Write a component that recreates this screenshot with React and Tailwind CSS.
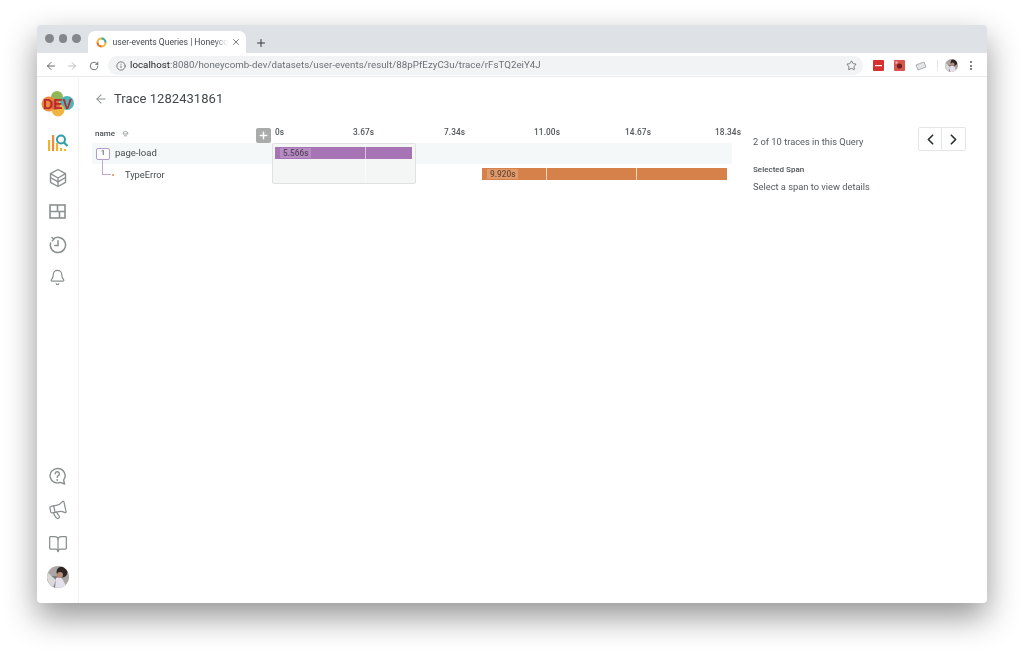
import React from "react";
import { ArrowLeft, ArrowRight, RotateCw, Info, Star, Plus, X, ChevronLeft, ChevronRight, Bell, Megaphone, BookOpen } from "lucide-react";

function Avatar({ size }) {
  return (
    <svg width={size} height={size} viewBox="0 0 22 22" className="block">
      <defs><clipPath id={"av" + size}><circle cx="11" cy="11" r="11" /></clipPath></defs>
      <g clipPath={"url(#av" + size + ")"}>
        <rect width="22" height="22" fill="#a9a6a4" />
        <rect x="0" y="10" width="12" height="12" fill="#7d7f7c" />
        <path d="M0 6 L9 14 L6 22 L0 22Z" fill="#d9dad8" />
        <path d="M9 12 Q14 10 16 14 L20 22 L8 22Z" fill="#e4e0ee" />
        <circle cx="15" cy="6" r="5.5" fill="#2e2523" />
        <circle cx="13" cy="9" r="3" fill="#b98d78" />
      </g>
    </svg>
  );
}

function Logo() {
  return (
    <div className="relative w-[34px] h-[26px]">
      <svg width="34" height="26" viewBox="0 0 34 26" className="absolute inset-0">
        <circle cx="16" cy="6" r="6" fill="#8fb85a" />
        <circle cx="8" cy="13" r="7.5" fill="#ee8a3c" />
        <circle cx="26" cy="12" r="7" fill="#4fb5bd" />
        <circle cx="17" cy="19" r="6.5" fill="#eeb640" />
        <circle cx="14" cy="14" r="5" fill="#dc6e45" />
      </svg>
      <span className="absolute inset-0 flex items-center justify-center text-[14px] font-bold text-[#b92a2b] font-['Liberation_Sans',sans-serif]">DEV</span>
    </div>
  );
}

function QueryIcon() {
  return (
    <svg width="22" height="20" viewBox="0 0 22 20" fill="none" className="mb-[3px] ml-[1px]">
      <rect x="1" y="7" width="2.2" height="11" fill="#f0b429" />
      <rect x="5" y="2" width="2.2" height="16" fill="#ee8a3c" />
      <rect x="9" y="10" width="2.2" height="8" fill="#f0b429" />
      <rect x="13" y="15" width="2" height="3" fill="#f0b429" />
      <rect x="17" y="16" width="2" height="2" fill="#f0b429" />
      <circle cx="14" cy="6.5" r="4" stroke="#2f9fa8" strokeWidth="2" />
      <path d="M17 9.5 L20.5 13" stroke="#2f9fa8" strokeWidth="2.2" />
    </svg>
  );
}

function BoxIcon() {
  return (
    <svg width="20" height="20" viewBox="0 0 20 20" fill="none" stroke="#8a8f8f" strokeWidth="1.4" strokeLinejoin="round">
      <path d="M10 1.5 L17.5 5.7 V14.3 L10 18.5 L2.5 14.3 V5.7Z" />
      <path d="M2.5 5.7 L10 10 L17.5 5.7 M10 10 V18.5" />
      <path d="M2.5 9.5 L10 13.8 L17.5 9.5" />
    </svg>
  );
}

function GridIcon() {
  return (
    <svg width="17" height="15" viewBox="0 0 17 15" fill="none" stroke="#8a8f8f" strokeWidth="1.6">
      <rect x="1" y="1" width="15" height="13" />
      <path d="M1 7.5 H16 M8.5 1 V7.5 M10.5 7.5 V14" />
    </svg>
  );
}

function HistoryIcon() {
  return (
    <svg width="18" height="18" viewBox="0 0 18 18" fill="none" stroke="#8a8f8f" strokeWidth="1.5" strokeLinecap="round">
      <path d="M4.5 2.8 A7.6 7.6 0 1 1 1.6 7" />
      <path d="M3 1.5 L4.8 3 L3.4 4.8" />
      <path d="M9 4.8 V9.6 H5.8" />
    </svg>
  );
}

function HelpIcon() {
  return (
    <svg width="19" height="19" viewBox="0 0 19 19" fill="none" stroke="#8a8f8f" strokeWidth="1.4" strokeLinecap="round" strokeLinejoin="round">
      <path d="M9.2 1.5 A7.6 7.2 0 1 0 12.4 15.4 L16.6 17 L15.6 13 A7.6 7.2 0 0 0 9.2 1.5Z" />
      <path d="M7.2 6.8 A2.1 2.1 0 1 1 10.2 8.7 Q9.2 9.3 9.2 10.4" />
      <path d="M9.2 12.9 V13" strokeWidth="1.8" />
    </svg>
  );
}

function SideIcon({ children }) {
  return <div className="h-[33.5px] flex items-center justify-center">{children}</div>;
}

const ticks = [
  { t: "0s", c: "w-[78px]" },
  { t: "3.67s", c: "w-[91px]" },
  { t: "7.34s", c: "w-[90px]" },
  { t: "11.00s", c: "w-[91px]" },
  { t: "14.67s", c: "w-[90px]" },
  { t: "18.34s", c: "w-[26px]" },
];

export default function App() {
  return (
    <div className="w-[1024px] h-[652px] overflow-hidden bg-white pt-[25px] pl-[37px] font-['Roboto',sans-serif] blur-[0.35px]">
      <div className="w-[950px] h-[578px] rounded-[4px] overflow-hidden bg-white flex flex-col shadow-[0_14px_32px_rgba(0,0,0,0.42)]">
        {/* Title bar */}
        <div className="h-[28px] shrink-0 bg-[#dee1e6] flex items-end">
          <div className="flex gap-[5px] pl-[8px] self-center pb-[1px]">
            <span className="w-[8.5px] h-[8.5px] rounded-full bg-[#85878b]" />
            <span className="w-[8.5px] h-[8.5px] rounded-full bg-[#85878b]" />
            <span className="w-[8.5px] h-[8.5px] rounded-full bg-[#85878b]" />
          </div>
          <div className="ml-[7px] w-[158px] h-[22px] bg-white rounded-t-[7px] flex items-center pl-[8px] pr-[5px]">
            <svg width="11" height="11" viewBox="0 0 11 11" fill="none" className="shrink-0">
              <circle cx="5.5" cy="5.5" r="4" stroke="#f2b93b" strokeWidth="2" />
              <path d="M5.5 1.5 A4 4 0 0 1 9.5 5.5" stroke="#41a9b5" strokeWidth="2" />
              <path d="M1.5 5.5 A4 4 0 0 0 5.5 9.5" stroke="#e8703a" strokeWidth="2" />
            </svg>
            <span className="ml-[6px] text-[8.6px] text-[#45484d] whitespace-nowrap [mask-image:linear-gradient(to_right,black_88%,transparent_100%)]">user-events Queries | Honeyco</span>
            <X size={10} strokeWidth={2} className="ml-auto text-[#5f6368]" />
          </div>
          <Plus size={12} strokeWidth={2} className="ml-[9px] mb-[4px] text-[#35383c]" />
        </div>
        {/* Toolbar */}
        <div className="h-[24px] shrink-0 bg-white border-b border-[#e8eaed] flex items-center pt-[2px]">
          <ArrowLeft size={12} strokeWidth={1.8} className="ml-[8px] text-[#55585c]" />
          <ArrowRight size={12} strokeWidth={1.8} className="ml-[9px] text-[#b5b8bc]" />
          <RotateCw size={10} strokeWidth={2} className="ml-[11px] text-[#55585c]" />
          <div className="ml-[9px] w-[755px] h-[19px] rounded-full bg-[#f1f3f4] flex items-center pl-[8px] pr-[6px]">
            <Info size={10} strokeWidth={1.8} className="text-[#55585c]" />
            <span className="ml-[4px] text-[9.7px] tracking-[0.05px] whitespace-nowrap text-[#6c7075]"><span className="text-[#222427]">localhost</span>:8080/honeycomb-dev/datasets/user-events/result/88pPfEzyC3u/trace/rFsTQ2eiY4J</span>
            <Star size={11} strokeWidth={1.6} className="ml-auto text-[#55585c]" />
          </div>
          <svg width="11" height="11" viewBox="0 0 11 11" className="ml-[10px]"><rect width="11" height="11" rx="1" fill="#d8302e" /><rect x="2" y="5" width="7" height="1.2" fill="#fff" /></svg>
          <svg width="11" height="11" viewBox="0 0 11 11" className="ml-[10px]"><rect width="11" height="11" rx="1" fill="#d9534f" /><circle cx="5.5" cy="6" r="2.6" fill="#6b2320" /><rect x="1.5" y="1.5" width="2" height="2" fill="#f3c6c3" /></svg>
          <svg width="12" height="10" viewBox="0 0 12 10" className="ml-[10px]"><path d="M1 4 L9 1 L11 6 L3 9Z" fill="#e3e5e6" stroke="#9a9d9f" strokeWidth="0.8" /></svg>
          <span className="ml-[10px] w-px h-[11px] bg-[#e3e5e7]" />
          <span className="ml-[7px]"><Avatar size={13} /></span>
          <div className="ml-[12px] flex flex-col gap-[1.5px]">
            <span className="w-[2px] h-[2px] rounded-full bg-[#55585c]" />
            <span className="w-[2px] h-[2px] rounded-full bg-[#55585c]" />
            <span className="w-[2px] h-[2px] rounded-full bg-[#55585c]" />
          </div>
        </div>
        {/* Page */}
        <div className="flex-1 flex min-h-0">
          {/* Sidebar */}
          <div className="w-[42px] shrink-0 border-r border-[#f1f2f2] flex flex-col items-stretch pt-[14px] pb-[9px]">
            <div className="flex justify-center h-[27px]"><Logo /></div>
            <div className="h-[10px]" />
            <SideIcon><QueryIcon /></SideIcon>
            <SideIcon><BoxIcon /></SideIcon>
            <SideIcon><GridIcon /></SideIcon>
            <SideIcon><HistoryIcon /></SideIcon>
            <SideIcon><Bell size={17} strokeWidth={1.7} className="text-[#8a8f8f] mb-[2px]" /></SideIcon>
            <div className="mt-auto" />
            <SideIcon><HelpIcon /></SideIcon>
            <SideIcon><Megaphone size={20} strokeWidth={1.5} className="text-[#8a8f8f] -rotate-12" /></SideIcon>
            <SideIcon><BookOpen size={20} strokeWidth={1.5} className="text-[#8a8f8f]" /></SideIcon>
            <SideIcon><Avatar size={22} /></SideIcon>
          </div>
          {/* Main */}
          <div className="flex-1 min-w-0 flex flex-col pl-[13px]">
            <div className="h-[22px] mt-[11px] flex items-center pl-[2px]">
              <ArrowLeft size={14} strokeWidth={1.8} className="text-[#8d9191]" />
              <span className="ml-[6px] text-[13px] text-[#42484b] tracking-[0.05px]">Trace 1282431861</span>
            </div>
            <div className="flex mt-[10px]">
              {/* Trace table */}
              <div className="w-[640px] shrink-0">
                <div className="h-[23px] flex items-center relative">
                  <span className="ml-[3px] text-[8px] font-medium text-[#4a4f52] w-[27px] mt-[4px]">name</span>
                  <svg width="7" height="7" viewBox="0 0 7 7" className="mt-[3px]" fill="none" stroke="#8a8f8f" strokeWidth="0.8"><path d="M1 4 A2.5 2.5 0 0 1 6 4 Z" /><path d="M2 5.8 H5" /></svg>
                  <span className="absolute left-[164px] top-[8px] w-[15px] h-[15px] rounded-[2px] bg-[#a9abab] flex items-center justify-center"><Plus size={11} strokeWidth={3} className="text-white" /></span>
                  <div className="absolute left-[183px] top-[3px] h-[19px] flex items-center">
                    {ticks.map((x) => <span key={x.t} className={"text-[8.3px] font-medium text-[#52575a] tracking-[0.1px] " + x.c}>{x.t}</span>)}
                  </div>
                </div>
                <div className="relative">
                  <div className="h-[21px] bg-[#f5f8f8] flex items-center">
                    <span className="ml-[4px] w-[14px] h-[12px] rounded-[2px] border border-[#b59cc8] bg-white flex items-center justify-center text-[7px] font-medium text-[#555]">1</span>
                    <span className="ml-[5px] w-[160px] text-[9.5px] text-[#464b4e]">page-load</span>
                  </div>
                  <div className="h-[21px] flex items-center">
                    <span className="ml-[20px] w-[2px] h-[2px] rounded-full bg-[#e58a3f]" />
                    <span className="ml-[11px] text-[9.3px] text-[#464b4e]">TypeError</span>
                  </div>
                  <span className="absolute left-[10px] top-[16px] w-[9px] h-[16px] border-l-[1.5px] border-b-[1.5px] border-[#c0a6d2]" />
                  <div className="absolute left-[180px] top-0 w-[144px] h-[41px] rounded-[2px] border border-[#dfe2e2] bg-[#f3f6f5] flex justify-start">
                    <span className="ml-[92px] w-px h-full bg-[#fafbfb]" />
                  </div>
                  <div className="absolute left-[183px] top-[4px] w-[137px] h-[12px] bg-[#a673b4] flex items-center">
                    <span className="ml-[5px] px-[3px] h-[10px] flex items-center bg-[#b68cc2] text-[8.3px] font-medium text-[#5a4660]">5.566s</span>
                    <span className="ml-auto mr-[46px] w-px h-full bg-[#d9c3e0]" />
                  </div>
                  <div className="absolute left-[390px] top-[25px] w-[245px] h-[12px] bg-[#d6804a] flex items-center">
                    <span className="ml-[5px] px-[3px] h-[10px] flex items-center bg-[#e09a6c] text-[8.3px] font-medium text-[#6a4a35]">9.920s</span>
                    <span className="ml-[28px] w-px h-full bg-[#f3d4bd]" />
                    <span className="ml-[89px] w-px h-full bg-[#f3d4bd]" />
                  </div>
                </div>
              </div>
              {/* Detail panel */}
              <div className="ml-[21px] mt-[7px] w-[213px] flex flex-col">
                <div className="flex items-center justify-between h-[24px]">
                  <span className="mt-[5px] text-[9.3px] text-[#555a5d]">2 of 10 traces in this Query</span>
                  <div className="flex">
                    <span className="w-[24px] h-[24px] rounded-l-[2px] border border-[#e4e6e6] flex items-center justify-center"><ChevronLeft size={17} strokeWidth={2.4} className="text-[#2b2f31]" /></span>
                    <span className="w-[24px] h-[24px] rounded-r-[2px] border border-l-0 border-[#e4e6e6] flex items-center justify-center"><ChevronRight size={17} strokeWidth={2.4} className="text-[#2b2f31]" /></span>
                  </div>
                </div>
                <span className="mt-[13px] text-[8px] font-medium text-[#4a4f52] leading-[12px]">Selected Span</span>
                <span className="mt-[4px] text-[9.3px] text-[#555a5d] leading-[13px]">Select a span to view details</span>
              </div>
            </div>
          </div>
        </div>
      </div>
    </div>
  );
}
